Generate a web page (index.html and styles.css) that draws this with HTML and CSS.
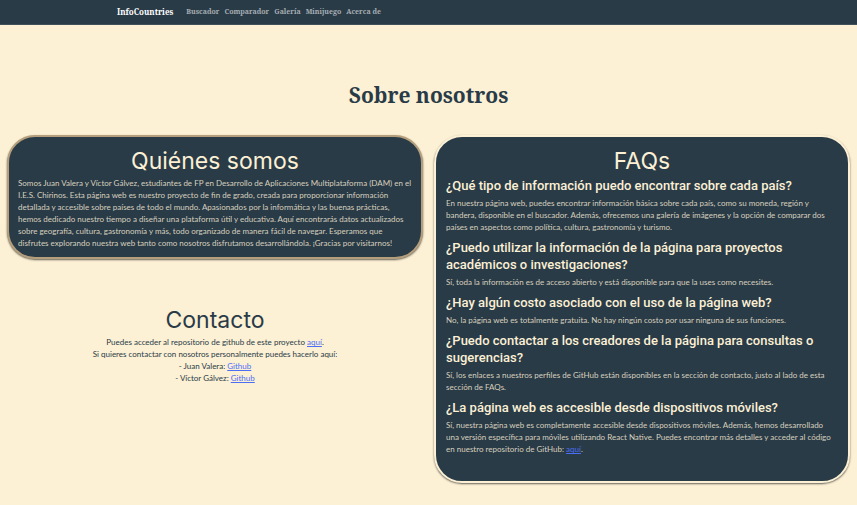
FILE: index.html
```html
<!DOCTYPE html>
<html lang="es">
<head>
<meta charset="utf-8">
<meta name="viewport" content="width=device-width, initial-scale=1">
<title>InfoCountries - Sobre nosotros</title>
<link rel="stylesheet" href="styles.css">
</head>
<body>
<nav class="navbar">
  <a class="brand" href="#">InfoCountries</a>
  <a class="nav-link" href="#">Buscador</a>
  <a class="nav-link" href="#">Comparador</a>
  <a class="nav-link" href="#">Galería</a>
  <a class="nav-link" href="#">Minijuego</a>
  <a class="nav-link" href="#">Acerca de</a>
</nav>
<main>
  <h1>Sobre nosotros</h1>
  <div class="columns">
    <div class="column">
      <section class="card card-about">
        <h2>Quiénes somos</h2>
        <p>Somos Juan Valera y Víctor Gálvez, estudiantes de FP en Desarrollo de Aplicaciones Multiplataforma (DAM) en el<br>I.E.S. Chirinos. Esta página web es nuestro proyecto de fin de grado, creada para proporcionar información<br>detallada y accesible sobre países de todo el mundo. Apasionados por la informática y las buenas prácticas,<br>hemos dedicado nuestro tiempo a diseñar una plataforma útil y educativa. Aquí encontrarás datos actualizados<br>sobre geografía, cultura, gastronomía y más, todo organizado de manera fácil de navegar. Esperamos que<br>disfrutes explorando nuestra web tanto como nosotros disfrutamos desarrollándola. ¡Gracias por visitarnos!</p>
      </section>
      <section class="contact">
        <h2>Contacto</h2>
        <p>Puedes acceder al repositorio de github de este proyecto <a href="#">aquí</a>.</p>
        <p>Si quieres contactar con nosotros personalmente puedes hacerlo aquí:</p>
        <p>- Juan Valera: <a href="#">Github</a></p>
        <p>- Víctor Gálvez: <a href="#">Github</a></p>
      </section>
    </div>
    <section class="card card-faq">
      <h2>FAQs</h2>
      <h3>¿Qué tipo de información puedo encontrar sobre cada país?</h3>
      <p>En nuestra página web, puedes encontrar información básica sobre cada país, como su moneda, región y<br>bandera, disponible en el buscador. Además, ofrecemos una galería de imágenes y la opción de comparar dos<br>países en aspectos como política, cultura, gastronomía y turismo.</p>
      <h3>¿Puedo utilizar la información de la página para proyectos académicos o investigaciones?</h3>
      <p>Sí, toda la información es de acceso abierto y está disponible para que la uses como necesites.</p>
      <h3>¿Hay algún costo asociado con el uso de la página web?</h3>
      <p>No, la página web es totalmente gratuita. No hay ningún costo por usar ninguna de sus funciones.</p>
      <h3>¿Puedo contactar a los creadores de la página para consultas o sugerencias?</h3>
      <p>Sí, los enlaces a nuestros perfiles de GitHub están disponibles en la sección de contacto, justo al lado de esta<br>sección de FAQs.</p>
      <h3>¿La página web es accesible desde dispositivos móviles?</h3>
      <p>Sí, nuestra página web es completamente accesible desde dispositivos móviles. Además, hemos desarrollado<br>una versión específica para móviles utilizando React Native. Puedes encontrar más detalles y acceder al código<br>en nuestro repositorio de GitHub: <a href="#">aquí</a>.</p>
    </section>
  </div>
</main>
</body>
</html>
```

FILE: styles.css
```css
* {
  box-sizing: border-box;
}

body {
  margin: 0;
  background: #fcf0d5;
  color: #293b47;
  font-family: Lato, "Liberation Sans", sans-serif;
  font-size: 8px;
  line-height: 12px;
}

h1,
h2,
h3,
p {
  margin: 0;
}

.navbar {
  display: flex;
  align-items: center;
  gap: 5px;
  padding: 6px 117px;
  background: #293b47;
  border-bottom: 1px solid #40505a;
  font-family: "Noto Serif", "DejaVu Serif Condensed", serif;
  font-weight: 700;
}

.navbar a {
  text-decoration: none;
}

.brand {
  margin-right: 8px;
  color: #ffffff;
  font-size: 8px;
}

.nav-link {
  color: #a6adb2;
  font-size: 7px;
}

h1 {
  padding: 56px 0 25px;
  font-family: "Noto Serif", "DejaVu Serif Condensed", "DejaVu Serif", serif;
  font-size: 21px;
  font-weight: 700;
  line-height: 29px;
  text-align: center;
}

.columns {
  display: grid;
  grid-template-columns: 1fr 1fr;
  gap: 11px;
  padding: 0 7px 22px;
}

h2 {
  padding-bottom: 1px;
  font-family: Inter, "Liberation Sans", sans-serif;
  font-size: 23px;
  font-weight: 400;
  line-height: 29px;
  text-align: center;
}

h3 {
  font-family: Roboto, "Liberation Sans", sans-serif;
  font-size: 13px;
  font-weight: 500;
  line-height: 17px;
}

.card {
  border: 2px solid #b49e7c;
  border-radius: 28px;
  background: #293b47;
  color: #fcf0d5;
  box-shadow: 0 1px 2px rgba(0, 0, 0, 0.6);
}

.card p {
  color: #d8d0be;
}

.card-about {
  padding: 10px 9px 8px;
}

.card-faq {
  padding: 10px 10px 20px;
  border-color: #fcf0d5;
}

.card-faq p {
  padding: 3px 0 6px;
}

.contact {
  padding-top: 47px;
  text-align: center;
}

a {
  color: #4b6ef5;
}
```
